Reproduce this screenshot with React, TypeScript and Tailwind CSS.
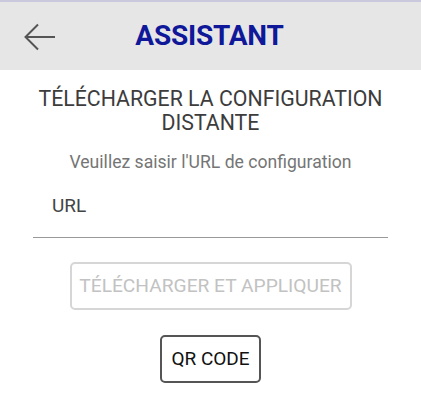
import React, { useState } from "react";

// Écran assistant : téléchargement de la configuration distante
const App: React.FC = () => {
  const [url, setUrl] = useState("");

  return (
    <div className="w-[421px] h-[412px] bg-white font-['Roboto',sans-serif] overflow-hidden">
      {/* Barre d'en-tête */}
      <div className="border-t-2 border-[#c9c8dd] bg-[#e6e6e6] h-[70px] flex items-center relative">
        <button className="absolute left-[24px] top-[21px] w-[32px] h-[28px] flex items-center">
          <svg width="32" height="28" viewBox="0 0 32 28" fill="none">
            <path d="M31 14H2M14 1.5L1.5 14L14 26.5" stroke="#555" strokeWidth="2" />
          </svg>
        </button>
        <h1 className="w-full text-center pr-[2px] text-[28px] font-bold text-[#10189a] tracking-[-0.2px]">
          ASSISTANT
        </h1>
      </div>

      {/* Contenu */}
      <div className="flex flex-col items-center">
        <h2 className="mt-[17px] text-[21.3px] leading-[24px] text-[#3c3c3c] text-center">
          TÉLÉCHARGER LA CONFIGURATION
          <br />
          DISTANTE
        </h2>
        <p className="mt-[16px] text-[17.6px] leading-[22px] text-[#757575]">
          Veuillez saisir l'URL de configuration
        </p>

        <div className="mt-[18px] w-[355px] border-b border-[#999]">
          <input
            value={url}
            onChange={(e) => setUrl(e.target.value)}
            placeholder="URL"
            className="w-full h-[46px] pl-[19px] pb-[18px] text-[19px] text-[#333] placeholder:text-[#444] outline-none bg-transparent"
          />
        </div>

        <button
          disabled
          className="mt-[24px] w-[282px] h-[48px] border-2 border-[#d6d6d6] rounded-[5px] text-[19.2px] text-[#c2c2c2]"
        >
          TÉLÉCHARGER ET APPLIQUER
        </button>

        <button className="mt-[25px] w-[101px] h-[48px] border-2 border-[#555] rounded-[5px] text-[19px] text-[#111]">
          QR CODE
        </button>
      </div>
    </div>
  );
};

export default App;
